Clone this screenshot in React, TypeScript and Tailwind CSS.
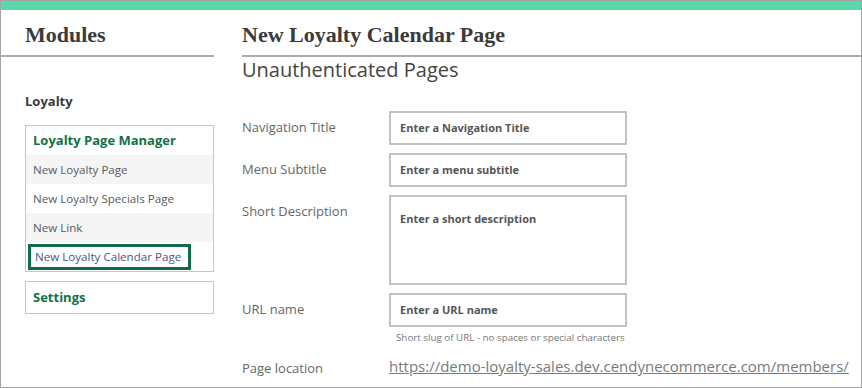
import React from 'react';

const sans = { fontFamily: '"Open Sans", "Noto Sans", sans-serif' };

const Field = ({ label, placeholder, tall }: { label: string; placeholder: string; tall?: boolean }) => (
    <div className="flex items-start">
        <div className="w-[147px] pt-[6px] text-[13px] leading-[20px] text-[#666]">{label}</div>
        <div
            className={`w-[238px] border-2 border-[#c2c2c2] bg-white px-[9px] ${tall ? 'h-[90px] pt-[8px]' : 'h-[34px] flex items-center'}`}
        >
            <span className="text-[11px] font-bold text-[#555] leading-[16px]">{placeholder}</span>
        </div>
    </div>
);

const App = () => {
    return (
        <div className="w-[862px] h-[388px] border border-[#a3a3a3] bg-white overflow-hidden flex flex-col" style={sans}>
            {/* Top accent bar */}
            <div className="h-[9px] bg-[#5bd8a9] shrink-0"></div>

            <div className="flex flex-1">
                {/* Sidebar */}
                <aside className="w-[213px] shrink-0">
                    <div className="pt-[11px] pb-[6px] pl-[24px] border-b-2 border-[#acacac]">
                        <h1 className="text-[22px] leading-[28px] text-[#3b3b3b] font-semibold" style={{ fontFamily: '"Liberation Serif", "DejaVu Serif", serif' }}>
                            Modules
                        </h1>
                    </div>

                    <div className="pl-[24px] pt-[35px]">
                        <div className="text-[13px] font-bold text-[#3a3a3a] leading-[18px]">Loyalty</div>

                        <div className="mt-[15px] border border-[#c6c6c6]">
                            <div className="h-[29px] flex items-center px-[7px] text-[13px] font-bold text-[#137046]">
                                Loyalty Page Manager
                            </div>
                            <div className="h-[29px] flex items-center px-[7px] bg-[#f5f5f5] text-[11.6px] text-[#5a5a5a]">New Loyalty Page</div>
                            <div className="h-[29px] flex items-center px-[7px] bg-white text-[11.6px] text-[#5a5a5a]">New Loyalty Specials Page</div>
                            <div className="h-[29px] flex items-center px-[7px] bg-[#f5f5f5] text-[11.6px] text-[#5a5a5a]">New Link</div>
                            <div className="h-[29px] flex items-center px-[2px]">
                                <div className="h-[26px] w-[163px] flex items-center px-[4px] border-[3px] border-[#0f6b4b] text-[11.6px] text-[#4b5487] whitespace-nowrap">
                                    New Loyalty Calendar Page
                                </div>
                            </div>
                        </div>

                        <div className="mt-[9px] h-[33px] border border-[#c6c6c6] flex items-center px-[7px] text-[13px] font-bold text-[#137046]">
                            Settings
                        </div>
                    </div>
                </aside>

                {/* Main content */}
                <main className="flex-1 ml-[28px]">
                    <div className="pt-[11px] pb-[6px] border-b-2 border-[#acacac]">
                        <h1 className="text-[22px] leading-[28px] text-[#3b3b3b] font-semibold" style={{ fontFamily: '"Liberation Serif", "DejaVu Serif", serif' }}>
                            New Loyalty Calendar Page
                        </h1>
                    </div>

                    <h2 className="mt-[1px] text-[20px] leading-[24px] text-[#444]">Unauthenticated Pages</h2>

                    <div className="mt-[29px] flex flex-col gap-[8px]">
                        <Field label="Navigation Title" placeholder="Enter a Navigation Title" />
                        <Field label="Menu Subtitle" placeholder="Enter a menu subtitle" />
                        <Field label="Short Description" placeholder="Enter a short description" tall />
                        <div>
                            <Field label="URL name" placeholder="Enter a URL name" />
                            <div className="pl-[154px] mt-[4px] text-[9.8px] leading-[14px] text-[#777] whitespace-nowrap">
                                Short slug of URL - no spaces or special characters
                            </div>
                        </div>
                    </div>

                    <div className="flex items-center mt-[8px]">
                        <div className="w-[147px] pt-[6px] text-[13px] text-[#666]">Page location</div>
                        <a href="#" className="text-[15px] text-[#7a7a7a] underline leading-[20px]">
                            https://demo-loyalty-sales.dev.cendynecommerce.com/members/
                        </a>
                    </div>
                </main>
            </div>
        </div>
    );
};

export default App;
